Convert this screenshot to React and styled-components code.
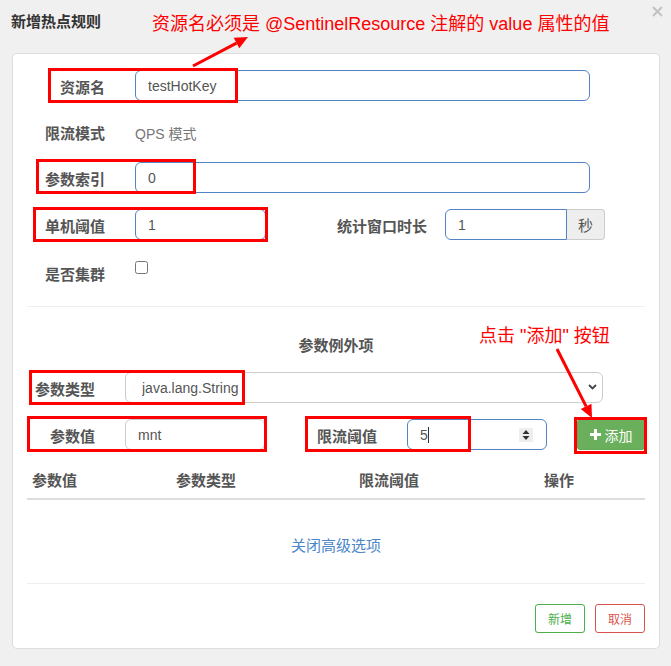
import React from 'react';
import styled, { createGlobalStyle } from 'styled-components';

const GlobalStyle = createGlobalStyle`
  html, body {
    margin: 0;
    padding: 0;
    background: #f0f0f0;
  }
  body {
    font-family: "Liberation Sans", "Noto Sans CJK SC", sans-serif;
    font-size: 14px;
    color: #555;
  }
  * {
    box-sizing: border-box;
  }
`;

const FONT = `"Liberation Sans", "Noto Sans CJK SC", sans-serif`;

const Page = styled.div`
  position: relative;
  width: 671px;
  height: 666px;
  background: #f0f0f0;
  overflow: hidden;
`;

const Header = styled.div`
  display: flex;
  justify-content: space-between;
  align-items: flex-start;
  height: 53px;
  padding: 12px 8px 0 11px;
`;

const Title = styled.h4`
  margin: 0;
  font-size: 15px;
  line-height: 20px;
  font-weight: bold;
  color: #333;
`;

const Close = styled.span`
  display: block;
  width: 11px;
  height: 11px;
  margin-top: -6px;
  svg {
    display: block;
  }
`;

const Card = styled.div`
  margin: 0 11px 0 12px;
  background: #fff;
  border: 1px solid #ddd;
  border-radius: 5px;
  padding: 16px 14px 15px 14px;
`;

const Row = styled.div`
  display: flex;
  align-items: ${p => (p.$top ? 'flex-start' : 'center')};
  height: ${p => p.$h || 31}px;
  margin-top: ${p => p.$mt || 0}px;
  margin-bottom: ${p => p.$mb ?? 0}px;
`;

const Label = styled.label`
  flex: 0 0 ${p => p.$w}px;
  text-align: right;
  padding-right: ${p => p.$gap ?? 30}px;
  padding-top: ${p => p.$pt ?? 4}px;
  font-size: 15px;
  line-height: 20px;
  font-weight: bold;
  color: #555;
  white-space: nowrap;
`;

const Static = styled.span`
  padding-top: 4px;
  font-size: 14px;
  line-height: 20px;
  color: #777;
`;

const Input = styled.input`
  flex: none;
  width: ${p => p.$w}px;
  height: 31px;
  padding: 0 12px;
  border: 1px solid ${p => (p.$blue ? '#5283c2' : '#ccc')};
  border-radius: ${p => (p.$group ? '6px 0 0 6px' : '6px')};
  font-family: ${FONT};
  font-size: 14px;
  color: #555;
  background: #fff;
  outline: none;
`;

const Group = styled.div`
  display: flex;
  height: 31px;
`;

const Addon = styled.span`
  display: flex;
  align-items: center;
  justify-content: center;
  width: 38px;
  height: 31px;
  background: #eee;
  border: 1px solid #ccc;
  border-left: none;
  border-radius: 0 4px 4px 0;
  font-size: 15px;
  color: #555;
`;

const Check = styled.input`
  margin: 6px 0 0 0;
  width: 13px;
  height: 13px;
`;

const Divider = styled.div`
  height: 1px;
  background: #eee;
  margin-top: ${p => p.$mt}px;
`;

const SectionTitle = styled.div`
  margin-top: 29px;
  text-align: center;
  font-size: 15px;
  line-height: 20px;
  font-weight: bold;
  color: #555;
`;

const SelectWrap = styled.div`
  position: relative;
  width: 478px;
  height: 31px;
  svg {
    position: absolute;
    right: 6px;
    top: 12px;
    pointer-events: none;
  }
`;

const Select = styled.select`
  appearance: none;
  width: 100%;
  height: 31px;
  padding: 0 30px 0 16px;
  border: 1px solid #ccc;
  border-radius: 6px;
  background: #fff;
  font-family: ${FONT};
  font-size: 14px;
  color: #555;
  outline: none;
`;

const NumberWrap = styled.div`
  position: relative;
  width: 140px;
  height: 31px;
`;

const Caret = styled.span`
  position: absolute;
  left: 21px;
  top: 8px;
  width: 1px;
  height: 16px;
  background: #333;
`;

const Spinner = styled.span`
  position: absolute;
  right: 14px;
  top: 9px;
  width: 14px;
  height: 14px;
  background: #eee;
  svg {
    display: block;
  }
`;

const AddButton = styled.button`
  margin-left: 30px;
  display: flex;
  align-items: center;
  justify-content: center;
  gap: 4px;
  width: 68px;
  height: 31px;
  padding: 0;
  border: 1px solid #62a957;
  border-radius: 3px;
  background: #6ab05c;
  color: #fff;
  font-family: ${FONT};
  font-size: 14px;
  svg {
    display: block;
  }
`;

const Table = styled.table`
  width: 100%;
  margin-top: 12px;
  border-collapse: collapse;
  th {
    padding: 9px 0 7px 5px;
    text-align: left;
    font-size: 15px;
    line-height: 20px;
    font-weight: bold;
    color: #555;
    border-bottom: 2px solid #ddd;
  }
`;

const Toggle = styled.div`
  margin-top: 36px;
  text-align: center;
  font-size: 15px;
  line-height: 20px;
  color: #4a86c8;
`;

const Footer = styled.div`
  display: flex;
  justify-content: flex-end;
  gap: 10px;
  margin-top: 20px;
`;

const OutlineButton = styled.button`
  width: 50px;
  height: 29px;
  padding: 0;
  background: #fff;
  border: 1px solid ${p => p.$color};
  border-radius: 3px;
  color: ${p => p.$color};
  font-family: ${FONT};
  font-size: 12px;
`;

const Overlay = styled.svg`
  position: absolute;
  left: 0;
  top: 0;
  pointer-events: none;
`;

const Note = styled.div`
  position: absolute;
  left: ${p => p.$x}px;
  top: ${p => p.$y}px;
  font-size: 18px;
  line-height: 24px;
  color: #ff0000;
  white-space: nowrap;
`;

const marks = [
  [48, 68, 238, 103],
  [36, 159, 196, 194],
  [33, 207, 268, 242],
  [29, 370, 245, 405],
  [27, 416, 267, 452],
  [305, 416, 471, 452],
  [574, 417, 647, 454],
];

function Arrow({ x1, y1, x2, y2 }) {
  const a = Math.atan2(y2 - y1, x2 - x1);
  const len = 13;
  const wing = 6;
  const bx = x2 - len * Math.cos(a);
  const by = y2 - len * Math.sin(a);
  const pts = [
    [x2, y2],
    [bx + wing * Math.sin(a), by - wing * Math.cos(a)],
    [bx - wing * Math.sin(a), by + wing * Math.cos(a)],
  ];
  return (
    <g>
      <line x1={x1} y1={y1} x2={bx} y2={by} stroke="#ff0000" strokeWidth="3" />
      <polygon points={pts.map(p => p.join(',')).join(' ')} fill="#ff0000" />
    </g>
  );
}

export default function App() {
  return (
    <>
      <GlobalStyle />
      <Page>
        <Header>
          <Title>新增热点规则</Title>
          <Close>
            <svg width="11" height="11" viewBox="0 0 11 11">
              <path d="M1 1L10 10M10 1L1 10" stroke="#c2c2c2" strokeWidth="2" />
            </svg>
          </Close>
        </Header>

        <Card>
          <Row $mb={15}>
            <Label $w={108}>资源名</Label>
            <Input $w={455} $blue defaultValue="testHotKey" />
          </Row>
          <Row $mb={15}>
            <Label $w={108}>限流模式</Label>
            <Static>QPS 模式</Static>
          </Row>
          <Row $mb={16}>
            <Label $w={108}>参数索引</Label>
            <Input $w={455} $blue defaultValue="0" />
          </Row>
          <Row $mb={15}>
            <Label $w={108}>单机阈值</Label>
            <Input $w={131} $blue defaultValue="1" />
            <Label $w={179} $gap={18}>统计窗口时长</Label>
            <Group>
              <Input $w={122} $blue $group defaultValue="1" />
              <Addon>秒</Addon>
            </Group>
          </Row>
          <Row $top $h={34}>
            <Label $w={108} $pt={10}>是否集群</Label>
            <Check type="checkbox" />
          </Row>

          <Divider $mt={17} />

          <SectionTitle>参数例外项</SectionTitle>
          <Row $mt={16}>
            <Label $w={98}>参数类型</Label>
            <SelectWrap>
              <Select defaultValue="java.lang.String">
                <option>java.lang.String</option>
              </Select>
              <svg width="9" height="6" viewBox="0 0 9 6">
                <path d="M1 1L4.5 4.5L8 1" stroke="#444" strokeWidth="1.8" fill="none" />
              </svg>
            </SelectWrap>
          </Row>
          <Row $mt={16}>
            <Label $w={98}>参数值</Label>
            <Input $w={140} defaultValue="mnt" />
            <Label $w={142}>限流阈值</Label>
            <NumberWrap>
              <Input $w={140} $blue defaultValue="5" />
              <Caret />
              <Spinner>
                <svg width="14" height="14" viewBox="0 0 14 14">
                  <path d="M3.5 6L7 2L10.5 6Z" fill="#333" />
                  <path d="M3.5 8L7 12L10.5 8Z" fill="#333" />
                </svg>
              </Spinner>
            </NumberWrap>
            <AddButton>
              <svg width="11" height="11" viewBox="0 0 11 11">
                <path d="M5.5 0V11M0 5.5H11" stroke="#fff" strokeWidth="3" />
              </svg>
              添加
            </AddButton>
          </Row>

          <Table>
            <thead>
              <tr>
                <th style={{ width: 144 }}>参数值</th>
                <th style={{ width: 183 }}>参数类型</th>
                <th style={{ width: 185 }}>限流阈值</th>
                <th>操作</th>
              </tr>
            </thead>
          </Table>

          <Toggle>关闭高级选项</Toggle>

          <Divider $mt={27} />

          <Footer>
            <OutlineButton $color="#4cae4c">新增</OutlineButton>
            <OutlineButton $color="#d9534f">取消</OutlineButton>
          </Footer>
        </Card>

        <Overlay width="671" height="666">
          {marks.map(([x1, y1, x2, y2], i) => (
            <rect
              key={i}
              x={x1 + 1.5}
              y={y1 + 1.5}
              width={x2 - x1 - 3}
              height={y2 - y1 - 3}
              fill="none"
              stroke="#ff0000"
              strokeWidth="3"
            />
          ))}
          <Arrow x1={193} y1={66} x2={248} y2={37} />
          <Arrow x1={557} y1={349} x2={592} y2={418} />
        </Overlay>

        <Note $x={152} $y={12}>资源名必须是 @SentinelResource 注解的 value 属性的值</Note>
        <Note $x={479} $y={324}>点击 "添加" 按钮</Note>
      </Page>
    </>
  );
}
